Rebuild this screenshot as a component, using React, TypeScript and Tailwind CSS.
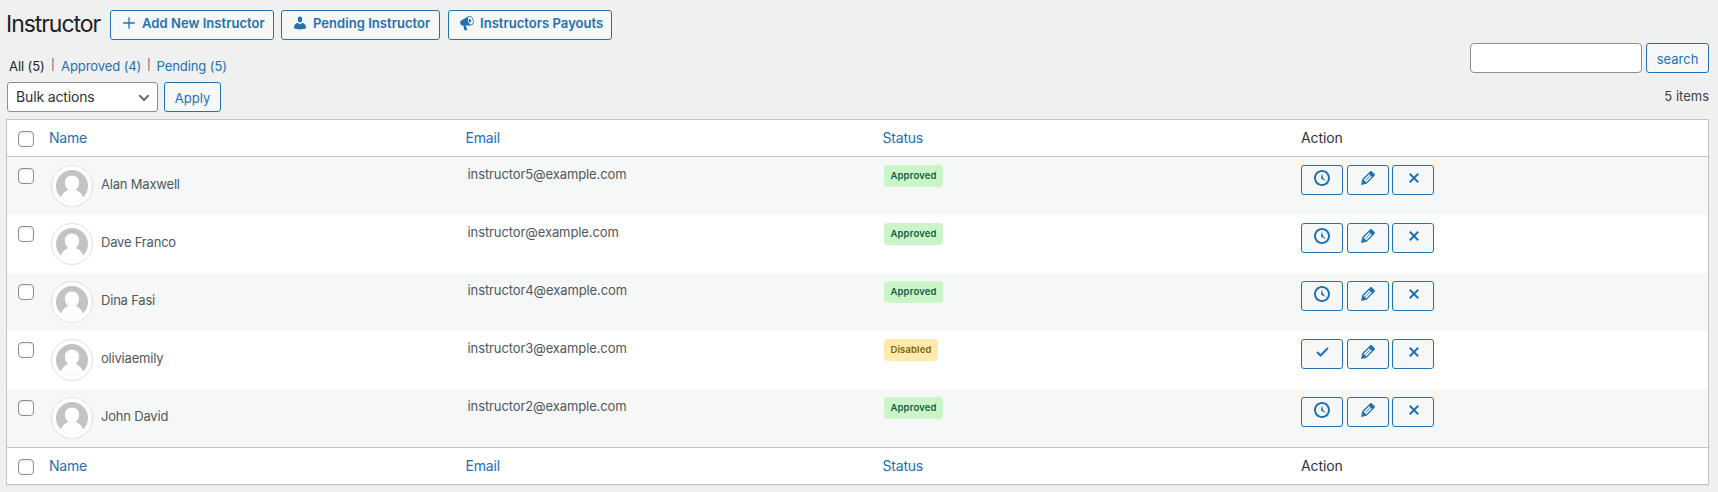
import type { ReactNode } from "react";

const ICONS = {
  clock:
    "M10 2c4.42 0 8 3.58 8 8s-3.58 8-8 8-8-3.58-8-8 3.58-8 8-8zm0 14c3.31 0 6-2.69 6-6s-2.69-6-6-6-6 2.69-6 6 2.69 6 6 6zm-.71-5.29c.07.05.14.1.23.15l-.02.02L14 13l-3.03-3.19L10 5l-.97 4.81h.01c0 .02-.01.05-.02.09S9 9.97 9 10c0 .28.1.52.29.71z",
  edit: "M13.89 3.39l2.71 2.72c.46.46.42 1.24.03 1.64l-8.01 8.02-5.56 1.16 1.16-5.58s7.6-7.63 7.99-8.03c.39-.39 1.22-.39 1.68.07zm-2.73 2.79l-5.59 5.61 1.11 1.11 5.54-5.65zm-2.97 8.23l5.58-5.6-1.07-1.08-5.59 5.6z",
  remove:
    "M14.95 6.46L11.41 10l3.54 3.54-1.41 1.41L10 11.42l-3.53 3.53-1.42-1.42L8.58 10 5.05 6.47l1.42-1.42L10 8.58l3.54-3.53z",
  approve: "M15.3 5.3l-6.8 6.8-2.8-2.8-1.4 1.4 4.2 4.2 8.2-8.2-1.4-1.4z",
  plus: "M17.2 9.2v1.600h-6.400v6.400H9.200v-6.400H2.800V9.200h6.400V2.800h1.600v6.400h6.400z",
  user: "M10 9.25c-2.27 0-2.73-3.44-2.73-3.44C7 4.02 7.82 2 9.97 2c2.16 0 2.98 2.02 2.71 3.81 0 0-.41 3.44-2.68 3.44zm0 2.57L12.72 10c2.39 0 4.52 2.33 4.52 4.53v2.49s-3.65 1.13-7.24 1.13c-3.65 0-7.24-1.13-7.24-1.13v-2.49c0-2.25 1.94-4.48 4.47-4.48z",
  megaphone:
    "M18.15 5.94c.46 1.62.38 3.22-.02 4.48-.42 1.28-1.26 2.18-2.3 2.48-.16.06-.26.06-.4.06-.06.02-.12.02-.18.02-.06.02-.14.02-.22.02h-6.8l2.22 5.5c.02.14-.06.26-.14.34-.08.1-.24.16-.34.16H6.95c-.1 0-.26-.06-.34-.16-.08-.08-.16-.2-.14-.34l-1-5.5H4.25l-.02-.02c-.5.06-1.08-.18-1.54-.62s-.88-1.08-1.06-1.88c-.24-.8-.2-1.56-.02-2.2.18-.62.58-1.08 1.06-1.3l.02-.02 9-5.4c.1-.06.18-.1.24-.16.06-.04.14-.08.24-.12.16-.08.28-.12.5-.18 1.04-.3 2.24.1 3.22.98s1.84 2.24 2.26 3.86zm-2.58 5.98h-.02c.4-.1.74-.34 1.04-.7.58-.7.86-1.76.86-3.04 0-.64-.1-1.3-.28-1.98-.34-1.36-1.02-2.5-1.78-3.24s-1.68-1.1-2.46-.88c-.82.22-1.4.96-1.7 2-.32 1.04-.28 2.36.06 3.72.38 1.36 1 2.5 1.8 3.24.78.74 1.62 1.1 2.48.88zm-2.54-7.08c.22-.04.42-.02.62.04.38.16.76.48 1.02 1s.42 1.2.42 1.78c0 .3-.04.56-.12.8-.18.48-.44.84-.86.94-.34.1-.8-.06-1.14-.4s-.64-.86-.78-1.5c-.18-.62-.12-1.24.02-1.72s.48-.84.82-.94z",
};

type IconName = keyof typeof ICONS;

function Icon({ name, className }: { name: IconName; className: string }) {
  return (
    <svg viewBox="0 0 20 20" fill="currentColor" className={className} aria-hidden="true">
      <path d={ICONS[name]} />
    </svg>
  );
}

function HeaderButton({ icon, width, children }: { icon: IconName; width: string; children: ReactNode }) {
  return (
    <button
      className={`flex h-[30px] items-start rounded-[3px] border border-[#2271b1] bg-[#f6f7f7] pt-[3px] pl-[10px] text-[13px] leading-[18px] font-semibold tracking-[0.05px] whitespace-nowrap text-[#2271b1] ${width}`}
    >
      <Icon name={icon} className="mt-[0.5px] mr-[5px] size-4 shrink-0" />
      {children}
    </button>
  );
}

function Checkbox() {
  return (
    <input
      type="checkbox"
      className="block size-4 appearance-none rounded-[4px] border border-[#8c8f94] bg-white shadow-[inset_0_1px_2px_rgba(0,0,0,0.1)]"
    />
  );
}

function Avatar() {
  return (
    <div className="size-[42px] shrink-0 rounded-full border border-[#dfe1e5] bg-white p-1">
      <svg viewBox="0 0 32 32" className="size-8">
        <defs>
          <clipPath id="face">
            <circle cx="16" cy="16" r="16" />
          </clipPath>
        </defs>
        <g clipPath="url(#face)">
          <rect width="32" height="32" fill="#c3c3c3" />
          <path
            d="M16 5.600c4.300 0 7.100 3.100 7.100 7 0 2.900-1 5.300-2.700 6.700v1.200c3.600 1.200 6.500 4 8 11.500H3.600c1.500-7.500 4.400-10.300 8-11.500v-1.200c-1.700-1.400-2.700-3.800-2.700-6.700 0-3.900 2.800-7 7.100-7z"
            fill="#fff"
          />
        </g>
      </svg>
    </div>
  );
}

function ActionButton({ icon }: { icon: IconName }) {
  return (
    <button className="flex h-[30px] w-[42px] items-start justify-center rounded-[3px] border border-[#2271b1] bg-[#f6f7f7] text-[#2271b1]">
      <span className={`flex h-6 items-center ${icon === "remove" ? "pl-px" : ""}`}>
        <Icon name={icon} className="size-5" />
      </span>
    </button>
  );
}

const COLS = "grid grid-cols-[42px_416.5px_417px_418.5px_1fr]";

function HeadRow({ edge }: { edge: string }) {
  return (
    <div className={`${COLS} h-[37px] border-[#c3c4c7] bg-white text-[14px] leading-[36px] tracking-[-0.2px] text-[#2271b1] ${edge}`}>
      <div className="pt-[11px] pl-[11px]">
        <Checkbox />
      </div>
      <div>Name</div>
      <div>Email</div>
      <div>Status</div>
      <div className="tracking-[-0.1px] text-[#2c3338]">Action</div>
    </div>
  );
}

const ROWS = [
  { name: "Alan Maxwell", email: "instructor5@example.com", approved: true },
  { name: "Dave Franco", email: "instructor@example.com", approved: true },
  { name: "Dina Fasi", email: "instructor4@example.com", approved: true },
  { name: "oliviaemily", email: "instructor3@example.com", approved: false },
  { name: "John David", email: "instructor2@example.com", approved: true },
];

export default function App() {
  return (
    <div className="h-[492px] w-[1718px] overflow-hidden bg-[#f0f0f1] pt-[10px] pr-[9px] pl-[6px] font-['Inter',sans-serif] text-[13px] text-[#3c434a]">
      <div className="flex h-[109px] justify-between">
        <div>
          <div className="flex">
            <h1 className="w-[104px] text-[23px] leading-[29px] tracking-[-1.05px] text-[#1d2327]">Instructor</h1>
            <HeaderButton icon="plus" width="w-[164px] mr-[7px]">Add New Instructor</HeaderButton>
            <HeaderButton icon="user" width="w-[159px] mr-[8px]">Pending Instructor</HeaderButton>
            <HeaderButton icon="megaphone" width="w-[164px]">Instructors Payouts</HeaderButton>
          </div>
          <div className="mt-[17px] flex pl-[3px] leading-[18px] tracking-[-0.08px] text-[#2271b1]">
            <span className="w-[42px] text-[#1d2327]">All (5)</span>
            <span className="w-[10px] text-[11px] leading-[17px] text-[#50575e]">|</span>
            <span className="w-[86px]">Approved (4)</span>
            <span className="w-[9.5px] text-[11px] leading-[17px] text-[#50575e]">|</span>
            <span>Pending (5)</span>
          </div>
          <div className="mt-[7px] flex gap-[6px] pl-[1px]">
            <button className="flex h-[30px] w-[151px] items-center justify-between rounded-[3px] border border-[#8c8f94] bg-white pr-[5px] pl-[8px] text-[14px] leading-[20px] tracking-[-0.15px] text-[#2c3338]">
              <span className="pb-[1px]">Bulk actions</span>
              <svg viewBox="0 0 20 20" className="mt-[1px] size-4" fill="#555">
                <path d="M5 6l5 5 5-5 2 1-7 7-7-7 2-1z" />
              </svg>
            </button>
            <button className="h-[30px] w-[57px] rounded-[3px] border border-[#2271b1] bg-[#f6f7f7] pt-px leading-[18px] text-[#2271b1]">
              Apply
            </button>
          </div>
        </div>
        <div className="pt-[33px]">
          <div className="flex gap-[4px]">
            <input
              type="text"
              className="h-[30px] w-[172px] rounded-[4px] border border-[#8c8f94] bg-white px-2"
            />
            <button className="h-[30px] w-[63px] rounded-[3px] border border-[#2271b1] bg-[#f6f7f7] pt-px leading-[18px] text-[#2271b1]">
              search
            </button>
          </div>
          <div className="mt-[14px] text-right leading-[18px]">5 items</div>
        </div>
      </div>

      <div className="border border-[#c3c4c7] bg-white shadow-[0_1px_1px_rgba(0,0,0,0.04)]">
        <HeadRow edge="border-b" />
        {ROWS.map((row) => (
          <div key={row.email} className={`${COLS} h-[58px] text-[#50575e] odd:bg-white even:bg-[#f6f7f7]`}>
            <div className="pt-[11px] pl-[11px]">
              <Checkbox />
            </div>
            <div className="flex items-start gap-[8px] pt-[8px] pl-[2px]">
              <Avatar />
              <span className="pt-[10px] leading-[18px] tracking-[-0.2px]">{row.name}</span>
            </div>
            <div className="pt-[8px] pl-[2px] leading-[18px] tracking-[-0.1px]">{row.email}</div>
            <div className="flex items-start pt-[8px] pl-[1.5px]">
              {row.approved ? (
                <span className="h-[22px] w-[59px] rounded-[4px] bg-[#cbf4c9] text-center text-[9.5px] leading-[21px] font-semibold tracking-[0.15px] text-[#0e6245]">
                  Approved
                </span>
              ) : (
                <span className="h-[22px] w-[54px] rounded-[4px] bg-[#ffe9ad] text-center text-[9.5px] leading-[21px] font-semibold tracking-[0.15px] text-[#7a6b00]">
                  Disabled
                </span>
              )}
            </div>
            <div className="flex pt-[8px]">
              <div className="mr-[4px]">
                <ActionButton icon={row.approved ? "clock" : "approve"} />
              </div>
              <div className="mr-[3px]">
                <ActionButton icon="edit" />
              </div>
              <ActionButton icon="remove" />
            </div>
          </div>
        ))}
        <HeadRow edge="border-t" />
      </div>
    </div>
  );
}
